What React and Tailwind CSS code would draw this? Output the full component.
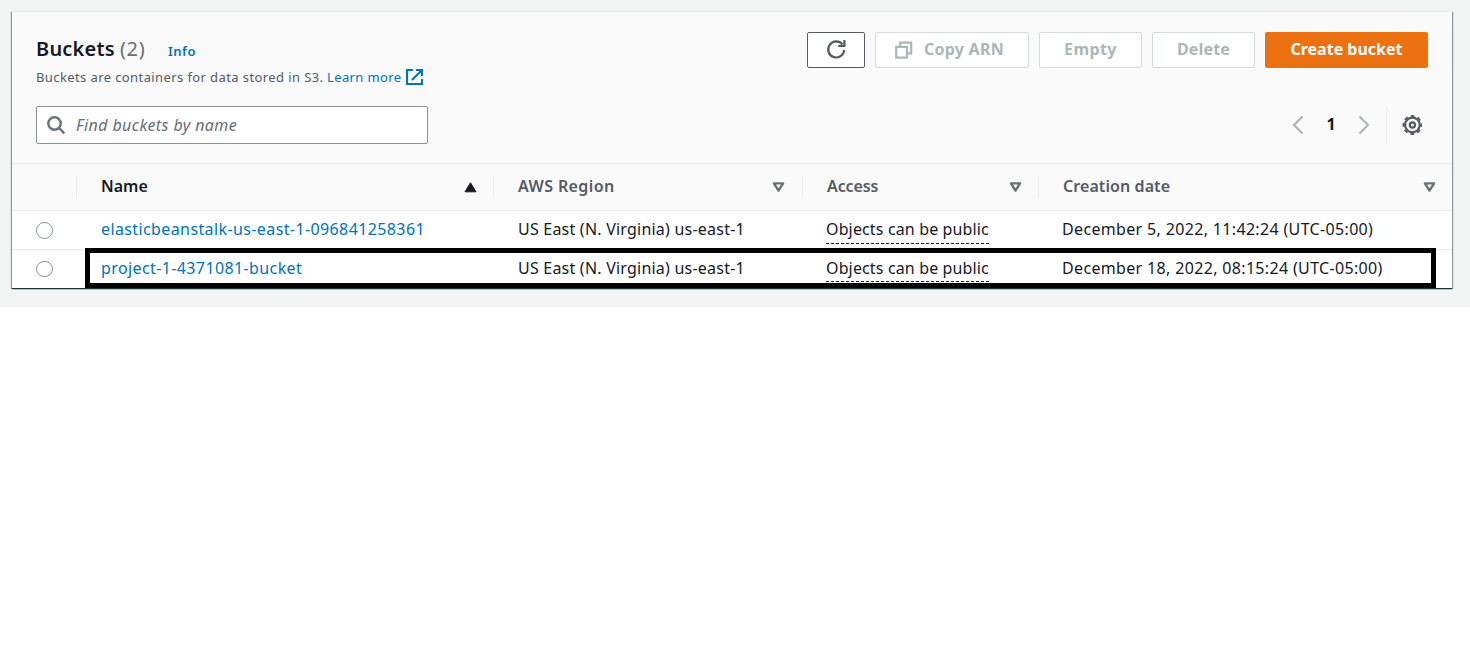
const Tri = ({ filled }) => (
  <svg width="14" height="12" viewBox="0 0 14 12" className="shrink-0">
    {filled ? (
      <path d="M7.5 1.8L13 10.8H2Z" fill="#16191f" stroke="#16191f" strokeLinejoin="round" />
    ) : (
      <path d="M2.9 2.4H12.1L7.5 9.6Z" fill="none" stroke="#687078" strokeWidth="2.4" strokeLinejoin="round" />
    )}
  </svg>
);

const Head = ({ children, dark, className, textClass }) => (
  <div className={`flex h-[23px] items-center justify-between border-l border-[#eaeded] pl-6 ${className}`}>
    <span className={`pb-[2px] ${dark ? "text-[#16191f]" : "text-[#545b64]"} ${textClass}`}>{children}</span>
    <Tri filled={dark} />
  </div>
);

const grid = "grid grid-cols-[64px_417px_309px_236px_1fr]";

const Row = ({ name, date, className, accessClass, radioClass }) => (
  <div className={`${grid} ${className}`}>
    <div className="pl-6 pt-[11px]">
      <div className={`w-[17px] rounded-full border border-[#879596] bg-white ${radioClass}`} />
    </div>
    <div className="pl-[25px] pt-[7px] tracking-[0.39px] text-[#0073bb]">{name}</div>
    <div className="pl-[25px] pt-[7px] tracking-[0.22px]">US East (N. Virginia) us-east-1</div>
    <div className="pl-6 pt-[7px]">
      <span className={`block w-[163px] border-b border-dashed border-[#16191f] tracking-[0.14px] ${accessClass}`}>Objects can be public</span>
    </div>
    <div className="pl-6 pt-[7px] tracking-[0.34px]">{date}</div>
  </div>
);

export default function App() {
  return (
    <div className="h-[648px] w-[1470px] overflow-hidden whitespace-nowrap bg-white font-['Noto_Sans',sans-serif] text-base leading-[22px] text-[#16191f]">
      <div className="h-[307px] bg-[#f2f3f3] pl-3 pt-[11px]">
        <div className="relative h-[277px] w-[1440px] border-t border-[#eaeded] bg-white shadow-[0_1px_1px_0_rgba(0,28,36,0.75),1px_1px_1px_0_rgba(0,28,36,0.35),-1px_1px_1px_0_rgba(0,28,36,0.35)]">
          <header className="h-[152px] border-b border-[#eaeded] bg-[#fafafa] px-6 pt-5">
            <div className="flex justify-between">
              <div className="h-[74px]">
                <div className="flex h-[34px] items-baseline pt-[3px] leading-[28px]">
                  <h1 className="w-[84px] text-xl font-semibold tracking-[0.2px]">Buckets</h1>
                  <span className="w-12 text-xl tracking-[0.6px] text-[#687078]">(2)</span>
                  <a className="text-[13px] font-semibold tracking-[0.5px] text-[#0073bb]">Info</a>
                </div>
                <div className="flex h-[22px] items-center text-[13px] text-[#545b64]">
                  <span className="w-[291px] tracking-[0.4px]">Buckets are containers for data stored in S3.</span>
                  <a className="w-[78px] tracking-[0.38px] text-[#0073bb]">Learn more</a>
                  <svg width="19" height="18" viewBox="0 0 19 18" fill="none" stroke="#0073bb" strokeWidth="2.1">
                    <path d="M8 2H2V16H17V11M11 2H17V8M17 2L7 12" />
                  </svg>
                </div>
              </div>
              <div className="flex h-9 gap-[10px] font-bold text-[#aab7b8]">
                <button className="flex w-[58px] items-center justify-center rounded-[2px] border border-[#545b64] bg-white">
                  <svg width="20" height="20" viewBox="0 0 20 20" fill="none" stroke="#545b64" strokeWidth="2.2">
                    <path d="M18.2 10A8 8 0 1 1 16.5 4.5M18.4 0V6H12.2" />
                  </svg>
                </button>
                <button className="flex w-[154px] items-center rounded-[2px] border border-[#d5dbdb] bg-white pl-[19px]">
                  <svg width="18" height="18" viewBox="0 0 18 18" fill="none" stroke="#aab7b8" strokeWidth="2.2">
                    <path d="M1.2 5.8H12V16.6H1.2ZM5.2 5.5V1.6H16.2V12.4H12.5" />
                  </svg>
                  <span className="pb-[2px] pl-[11px] tracking-[0.25px]">Copy ARN</span>
                </button>
                <button className="w-[103px] rounded-[2px] border border-[#d5dbdb] bg-white pb-[2px] tracking-[0.4px]">Empty</button>
                <button className="w-[103px] rounded-[2px] border border-[#d5dbdb] bg-white pb-[2px] tracking-[0.15px]">Delete</button>
                <button className="w-[163px] rounded-[2px] bg-[#ec7211] pb-[2px] text-white">Create bucket</button>
              </div>
            </div>
            <div className="flex h-[38px] justify-between">
              <div className="flex w-[392px] items-center rounded-[2px] border border-[#879596] bg-white pl-[10px] italic text-[#687078]">
                <svg width="19" height="19" viewBox="0 0 19 19" fill="none" stroke="#687078" strokeWidth="2.4">
                  <circle cx="7.5" cy="7.5" r="6.2" />
                  <path d="M12 12L17.3 17.3" />
                </svg>
                <span className="pl-[10px] tracking-[0.4px]">Find buckets by name</span>
              </div>
              <div className="flex items-center">
                <svg width="12" height="20" viewBox="0 0 12 20" fill="none" stroke="#aab7b8" strokeWidth="2.2">
                  <path d="M10.5 1.5L2 10L10.5 18.5" />
                </svg>
                <span className="w-[54px] pb-[2px] text-center font-bold">1</span>
                <svg width="12" height="20" viewBox="0 0 12 20" fill="none" stroke="#aab7b8" strokeWidth="2.2">
                  <path d="M1.5 1.5L10 10L1.5 18.5" />
                </svg>
                <div className="ml-4 h-full w-px bg-[#eaeded]" />
                <svg className="ml-[15px] mr-[6px]" width="20" height="20" viewBox="0 0 20 20" fill="none" stroke="#545b64" strokeWidth="2.2">
                  <circle cx="10.4" cy="10" r="7.3" />
                  <circle cx="10.4" cy="10" r="2.6" />
                  <circle cx="10.4" cy="10" r="9" strokeWidth="1.8" strokeDasharray="3.9 3.17" strokeDashoffset="1.95" />
                </svg>
              </div>
            </div>
          </header>
          <div className={`${grid} h-[47px] items-center border-b border-[#eaeded] bg-[#fafafa] font-semibold`}>
            <div />
            <Head dark className="pr-4">Name</Head>
            <Head className="pr-[17px]" textClass="tracking-[0.4px]">AWS Region</Head>
            <Head className="pr-4" textClass="tracking-[-0.1px]">Access</Head>
            <Head className="pr-4" textClass="tracking-[0.08px]">Creation date</Head>
          </div>
          <Row
            name="elasticbeanstalk-us-east-1-096841258361"
            date="December 5, 2022, 11:42:24 (UTC-05:00)"
            className="h-[39px] border-b border-[#eaeded]"
            accessClass="h-[26px]"
            radioClass="h-[17px]"
          />
          <Row
            name="project-1-4371081-bucket"
            date="December 18, 2022, 08:15:24 (UTC-05:00)"
            className="h-[38px]"
            accessClass="h-[25px]"
            radioClass="h-4"
          />
          <div className="absolute left-[73px] top-[236px] h-10 w-[1351px] border-[5px] border-black" />
        </div>
      </div>
    </div>
  );
}
